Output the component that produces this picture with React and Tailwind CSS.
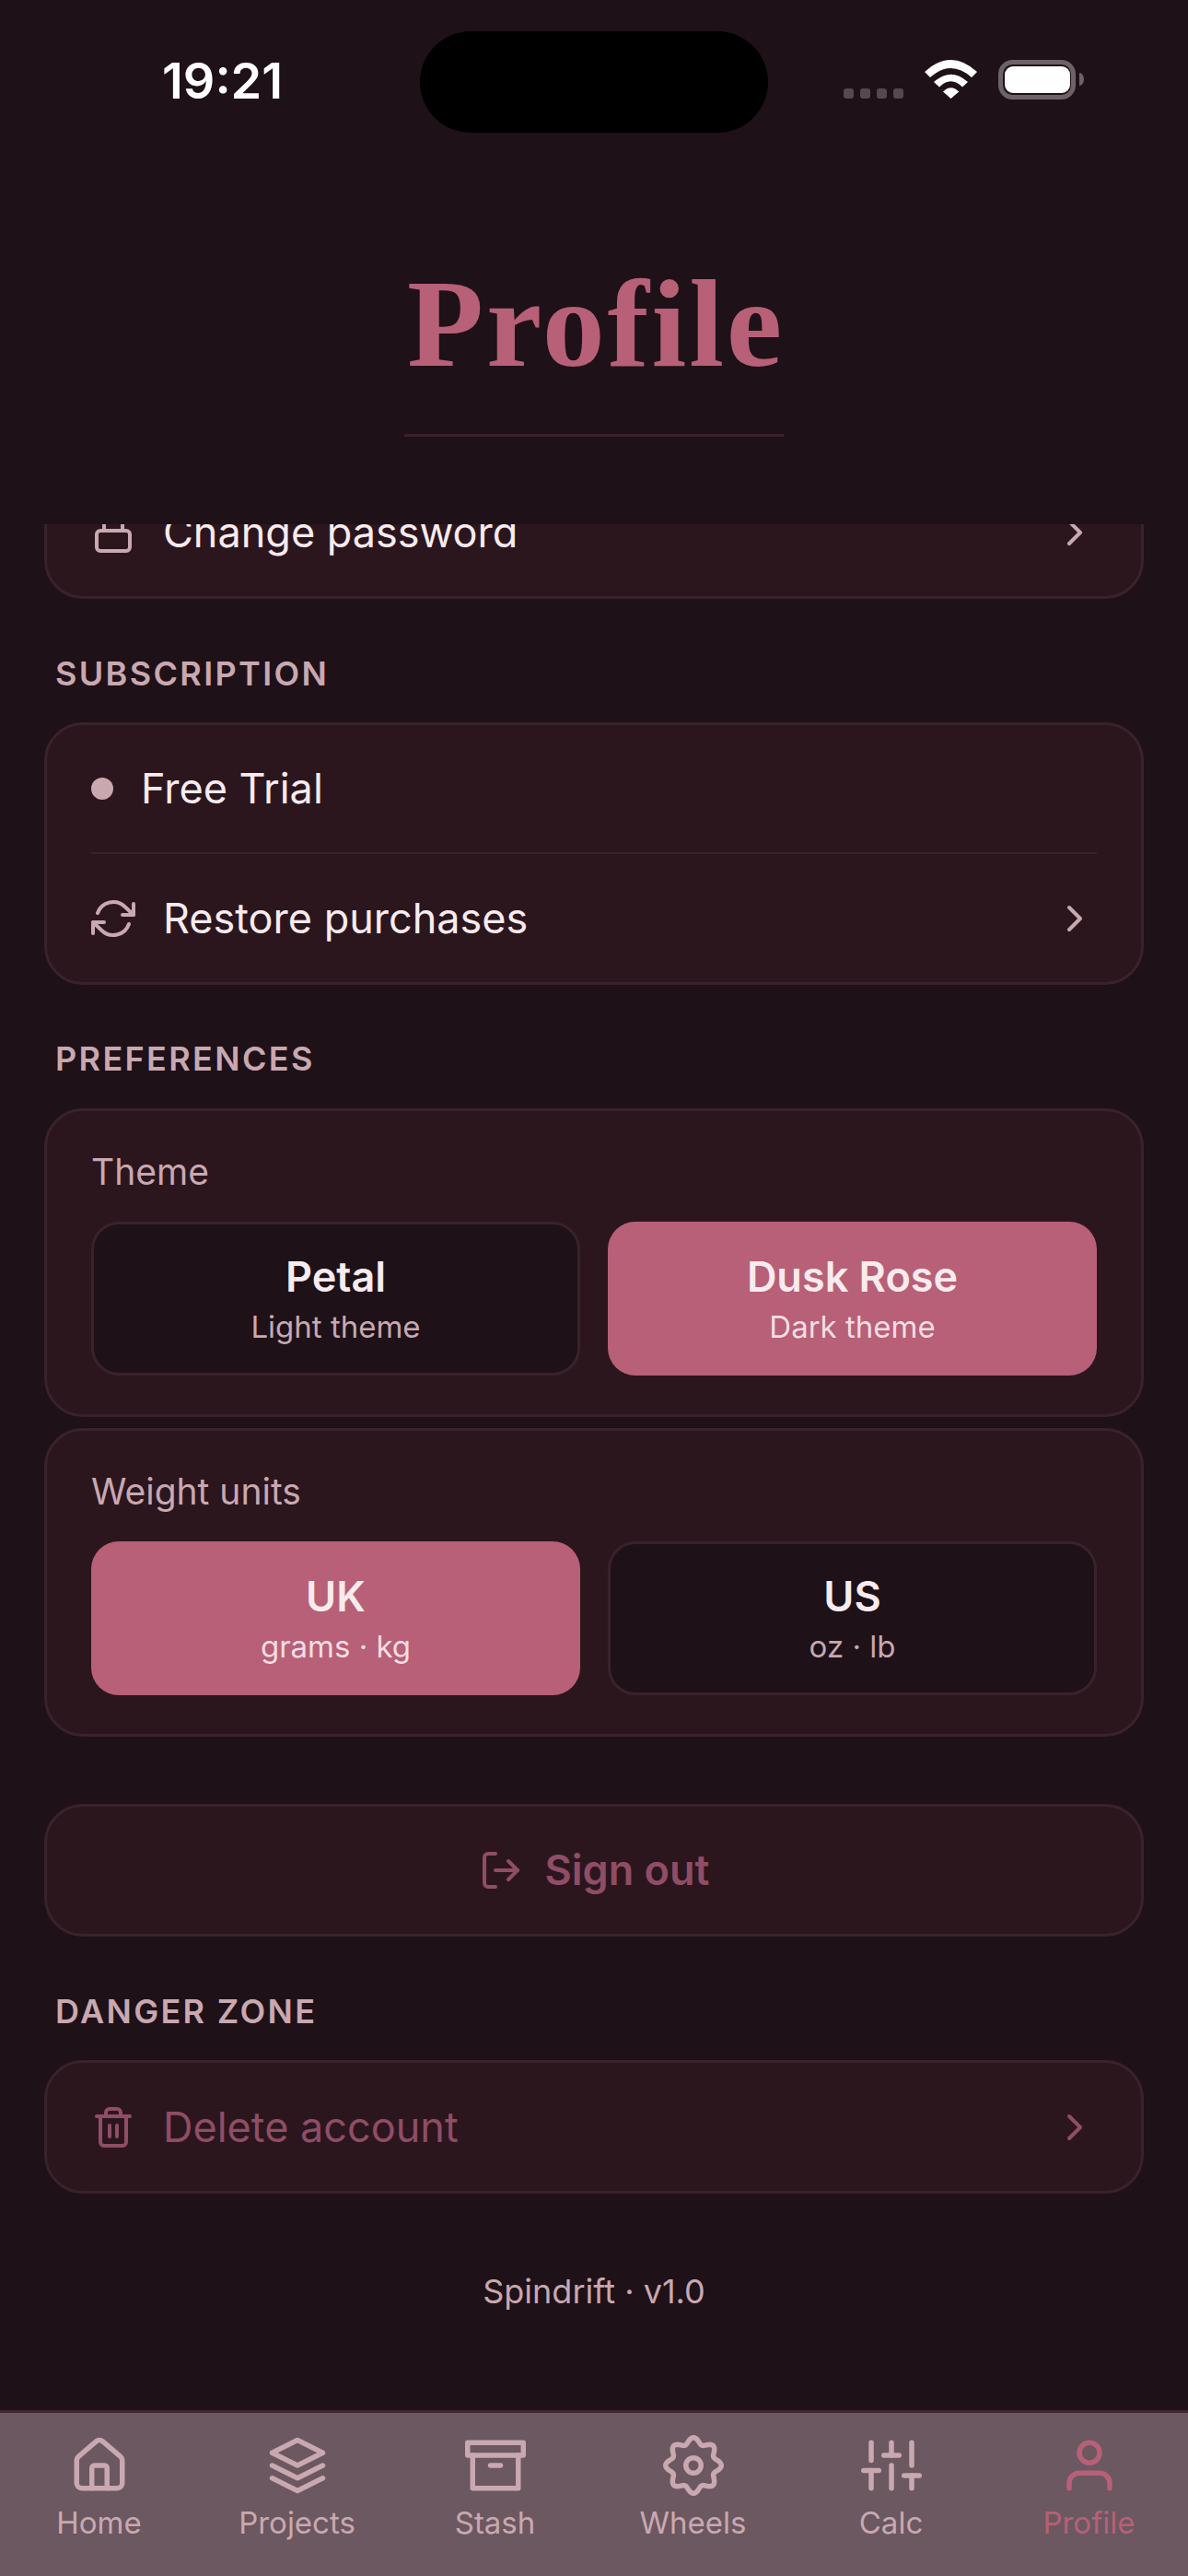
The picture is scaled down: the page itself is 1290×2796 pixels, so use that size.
const gearPath = Array.from({ length: 144 }, (_, i) => {
  const t = (i / 144) * Math.PI * 2;
  const r = 9.8 + 1.2 * Math.cos(8 * t);
  const x = 12 + r * Math.sin(t);
  const y = 12 - r * Math.cos(t);
  return `${i === 0 ? "M" : "L"}${x.toFixed(2)} ${y.toFixed(2)}`;
}).join(" ") + " Z";

function Icon({ size = 48, className = "", children }) {
  return (
    <svg
      width={size}
      height={size}
      viewBox="0 0 24 24"
      fill="none"
      stroke="currentColor"
      strokeWidth="2"
      strokeLinecap="round"
      strokeLinejoin="round"
      className={`shrink-0 ${className}`}
    >
      {children}
    </svg>
  );
}

const Chevron = ({ className = "text-[#c9a8b0]" }) => (
  <Icon className={className}>
    <path d="M9 18l6-6-6-6" />
  </Icon>
);
const Lock = () => (
  <Icon className="text-[#c9a8b0]">
    <rect x="3" y="11" width="18" height="11" rx="2" />
    <path d="M7 11V7a5 5 0 0 1 10 0v4" />
  </Icon>
);
const Refresh = () => (
  <Icon className="text-[#c9a8b0]">
    <path d="M23 4v6h-6" />
    <path d="M1 20v-6h6" />
    <path d="M3.51 9a9 9 0 0 1 14.85-3.36L23 10M1 14l4.64 4.36A9 9 0 0 0 20.49 15" />
  </Icon>
);
const LogOut = () => (
  <Icon className="text-[#8f4d66]">
    <path d="M9 21H5a2 2 0 0 1-2-2V5a2 2 0 0 1 2-2h4" />
    <path d="M16 17l5-5-5-5" />
    <path d="M21 12H9" />
  </Icon>
);
const Trash = () => (
  <Icon className="text-[#8f4d66]">
    <path d="M3 6h18" />
    <path d="M19 6v14a2 2 0 0 1-2 2H7a2 2 0 0 1-2-2V6m3 0V4a2 2 0 0 1 2-2h4a2 2 0 0 1 2 2v2" />
    <path d="M10 11v6" />
    <path d="M14 11v6" />
  </Icon>
);

const tabs = [
  {
    label: "Home",
    icon: (
      <>
        <path d="M15 21v-8a1 1 0 0 0-1-1h-4a1 1 0 0 0-1 1v8" />
        <path d="M3 10a2 2 0 0 1 .709-1.528l7-6a2 2 0 0 1 2.582 0l7 6A2 2 0 0 1 21 10v9a2 2 0 0 1-2 2H5a2 2 0 0 1-2-2z" />
      </>
    ),
  },
  {
    label: "Projects",
    icon: (
      <>
        <path d="M12 2L2 7l10 5 10-5-10-5z" />
        <path d="M2 17l10 5 10-5" />
        <path d="M2 12l10 5 10-5" />
      </>
    ),
  },
  {
    label: "Stash",
    icon: (
      <>
        <path d="M21 8v13H3V8" />
        <rect x="1" y="3" width="22" height="5" />
        <path d="M10 12h4" />
      </>
    ),
  },
  {
    label: "Wheels",
    icon: (
      <>
        <path d={gearPath} />
        <circle cx="12" cy="12" r="3" />
      </>
    ),
  },
  {
    label: "Calc",
    icon: (
      <>
        <path d="M4 21v-7" />
        <path d="M4 10V3" />
        <path d="M12 21v-9" />
        <path d="M12 8V3" />
        <path d="M20 21v-5" />
        <path d="M20 12V3" />
        <path d="M1 14h6" />
        <path d="M9 8h6" />
        <path d="M17 16h6" />
      </>
    ),
  },
  {
    label: "Profile",
    active: true,
    icon: (
      <>
        <path d="M20 21v-2a4 4 0 0 0-4-4H8a4 4 0 0 0-4 4v2" />
        <circle cx="12" cy="7" r="4" />
      </>
    ),
  },
];

function SectionLabel({ children, className = "" }) {
  return (
    <div className={`h-[48px] pl-[60px] text-[36px] leading-[50px] font-semibold tracking-[2.35px] text-[#c9a8b0] ${className}`}>
      {children}
    </div>
  );
}

function Card({ className = "", children }) {
  return (
    <div className={`mx-[48px] rounded-[42px] border-[3px] border-[#3a222c] bg-[#2b161e] ${className}`}>
      {children}
    </div>
  );
}

function Row({ icon, children, height = "h-[138px]", text = "text-[#f8ebee]", chevron = "text-[#c9a8b0]" }) {
  return (
    <div className={`flex items-center px-[48px] ${height}`}>
      {icon}
      <span className={`ml-[30px] flex-1 text-[45px] leading-[60px] ${text}`}>{children}</span>
      <Chevron className={chevron} />
    </div>
  );
}

function Option({ title, sub, active }) {
  return active ? (
    <div className="flex h-[167px] flex-col items-center rounded-[30px] bg-[#b76078] pt-[30px]">
      <div className="text-[45px] leading-[60px] font-semibold text-[#f8ebee]">{title}</div>
      <div className="text-[33px] leading-[48px] text-[#f3dde3]">{sub}</div>
    </div>
  ) : (
    <div className="flex h-[167px] flex-col items-center rounded-[30px] border-[3px] border-[#3a222c] bg-[#1e1118] pt-[27px]">
      <div className="text-[45px] leading-[60px] font-semibold text-[#f8ebee]">{title}</div>
      <div className="text-[33px] leading-[48px] text-[#c9a8b0]">{sub}</div>
    </div>
  );
}

function Choice({ label, options, className = "" }) {
  return (
    <Card className={`h-[335px] px-[48px] pt-[42px] ${className}`}>
      <div className="text-[39px] leading-[48px] text-[#c9a8b0]">{label}</div>
      <div className="mt-[30px] grid grid-cols-2 gap-[30px]">
        {options.map((o) => (
          <Option key={o.title} {...o} />
        ))}
      </div>
    </Card>
  );
}

export default function App() {
  return (
    <div className="flex h-[2796px] w-[1290px] flex-col overflow-hidden bg-[#1e1118] font-['Inter',sans-serif]">
      <header className="h-[569px] shrink-0 bg-[#1e1118]">
        <div className="flex h-[144px]">
          <div className="w-[456px] pl-[176px] pt-[62px] text-[54px] leading-[51px] font-semibold text-white">19:21</div>
          <div className="mt-[34px] h-[110px] w-[378px] rounded-full bg-black" />
          <div className="ml-[82px] mt-[65px] flex h-[43px] items-end gap-[23px]">
            <svg width="65" height="11" viewBox="0 0 65 11" fill="#57484e" className="mb-[1px]">
              <rect x="0" width="11" height="11" rx="3" />
              <rect x="18" width="11" height="11" rx="3" />
              <rect x="36" width="11" height="11" rx="3" />
              <rect x="54" width="11" height="11" rx="3" />
            </svg>
            <svg width="57" height="42" viewBox="0 0 57 42" fill="#fff" className="mb-[1px]">
              <path d="M0 13Q28.5 -13 57 13L51 19Q28.5 -1 6 19Z" />
              <path d="M10 24Q28.5 7.4 47 24L41 29.5Q28.5 17 16 29.5Z" />
              <path d="M20 34.5Q28.5 26 37.3 34.5L28.5 42Z" />
            </svg>
            <svg width="93" height="43" viewBox="0 0 93 43">
              <rect x="2.5" y="2.5" width="79" height="38" rx="13" fill="none" stroke="#6f6267" strokeWidth="5" />
              <rect x="7" y="7" width="71" height="29" rx="9" fill="#fff" />
              <path d="M88 14a5 7 0 0 1 0 14z" fill="#6f6267" />
            </svg>
          </div>
        </div>
        <h1 className="mt-[122px] h-[170px] pl-[4px] text-center font-['Liberation_Serif',serif] text-[136px] leading-[170px] font-bold tracking-[2.8px] text-[#b76078]">
          Profile
        </h1>
        <div className="mx-auto mt-[35px] h-[3px] w-[412px] bg-[#3a222c]" />
      </header>

      <main className="min-h-0 flex-1 overflow-hidden">
        <Card className="-mt-[63px]">
          <Row icon={<Lock />} height="h-[138px]">Change password</Row>
        </Card>

        <SectionLabel className="mt-[56px]">SUBSCRIPTION</SectionLabel>
        <Card className="mt-[30px]">
          <div className="flex h-[138px] items-center px-[48px]">
            <span className="h-[24px] w-[24px] rounded-full bg-[#c9a8b0]" />
            <span className="ml-[30px] text-[45px] leading-[60px] text-[#f8ebee]">Free Trial</span>
          </div>
          <div className="mx-[48px] h-[2px] bg-[#3a222c]" />
          <Row icon={<Refresh />} height="h-[139px]">Restore purchases</Row>
        </Card>

        <SectionLabel className="mt-[55px]">PREFERENCES</SectionLabel>
        <Choice
          className="mt-[31px]"
          label="Theme"
          options={[
            { title: "Petal", sub: "Light theme" },
            { title: "Dusk Rose", sub: "Dark theme", active: true },
          ]}
        />
        <Choice
          className="mt-[12px]"
          label="Weight units"
          options={[
            { title: "UK", sub: "grams · kg", active: true },
            { title: "US", sub: "oz · lb" },
          ]}
        />

        <Card className="mt-[73px] flex h-[144px] items-center justify-center gap-[24px]">
          <LogOut />
          <span className="text-[45px] leading-[60px] font-semibold text-[#8f4d66]">Sign out</span>
        </Card>

        <SectionLabel className="mt-[56px]">DANGER ZONE</SectionLabel>
        <Card className="mt-[30px]">
          <Row icon={<Trash />} height="h-[139px]" text="text-[#8f4d66]" chevron="text-[#8f4d66]">Delete account</Row>
        </Card>

        <div className="mt-[82px] text-center text-[36px] leading-[48px] text-[#c9a8b0]">Spindrift · v1.0</div>
      </main>

      <nav className="grid h-[180px] shrink-0 grid-cols-6 border-t-[3px] border-[#40262f] bg-[#6b5860]">
        {tabs.map((t) => (
          <div key={t.label} className={`flex flex-col items-center pt-[24px] ${t.active ? "text-[#b76078]" : "text-[#c9a8b0]"}`}>
            <Icon size={66}>{t.icon}</Icon>
            <span className="mt-[8px] text-[33px] leading-[42px]">{t.label}</span>
          </div>
        ))}
      </nav>
    </div>
  );
}
